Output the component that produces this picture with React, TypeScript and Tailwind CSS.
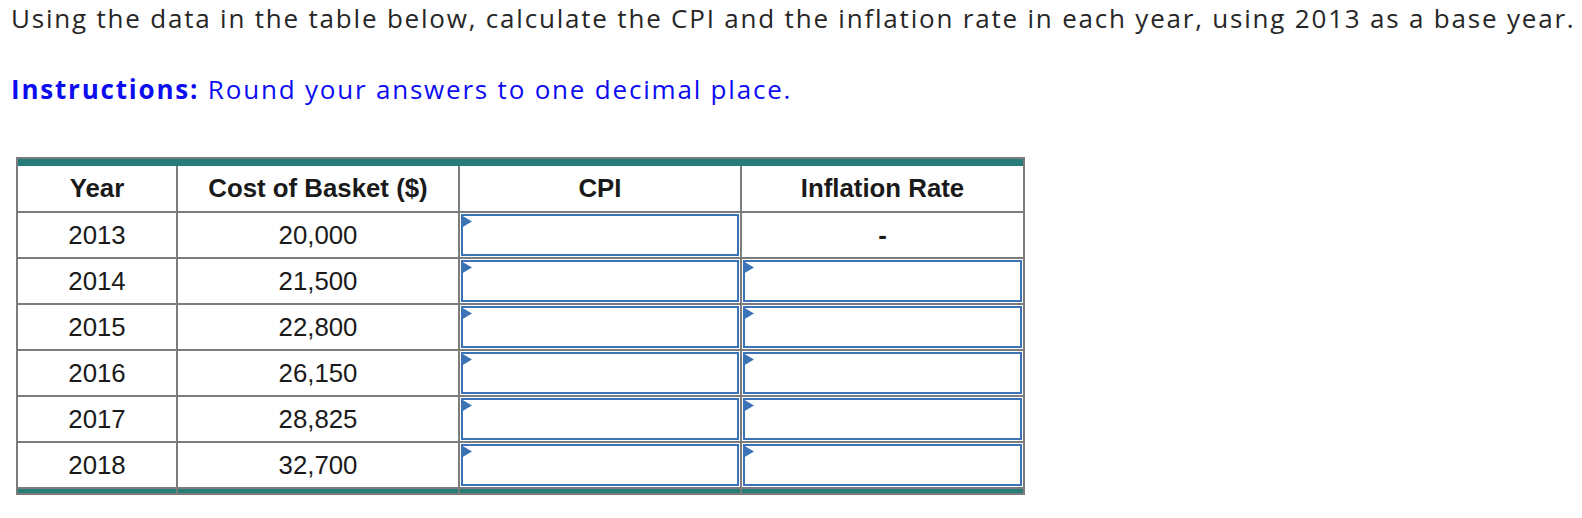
import React from "react";

const rows: [string, string][] = [
  ["2013", "20,000"],
  ["2014", "21,500"],
  ["2015", "22,800"],
  ["2016", "26,150"],
  ["2017", "28,825"],
  ["2018", "32,700"],
];

function Tri() {
  return (
    <svg
      className="absolute -left-[2px] -top-[1px]"
      width="11"
      height="13"
      viewBox="0 0 11 13"
    >
      <polygon points="0,0 11,6.5 0,13" fill="#3c72b6" />
    </svg>
  );
}

function InputCell() {
  return (
    <div className="bg-white p-px h-full">
      <div className="relative h-full border-2 border-[#3c72b6] bg-white">
        <Tri />
      </div>
    </div>
  );
}

function TextCell({ children, bold }: { children: React.ReactNode; bold?: boolean }) {
  return (
    <div
      className={`bg-white h-full flex items-center justify-center text-[25.8px] text-[#1a1a1a] ${
        bold ? "font-bold" : ""
      }`}
    >
      {children}
    </div>
  );
}

export default function App() {
  return (
    <div className="bg-white w-[1582px] h-[518px] overflow-hidden">
      <div
        className="pl-[11px] text-[26px] leading-[36px] tracking-[1.8px] text-[#262626] whitespace-nowrap"
        style={{ fontFamily: "'Open Sans', Lato, sans-serif" }}
      >
        <p>
          Using the data in the table below, calculate the CPI and the inflation rate in each year, using 2013 as a base year.
        </p>
        <p className="mt-[35px] text-[#0c0cf0]">
          <span className="font-bold">Instructions:</span> Round your answers to one decimal place.
        </p>
      </div>
      <div
        className="ml-[16px] mt-[50px] w-[1009px] border-2 border-[#7c7c7c] bg-[#7c7c7c]"
        style={{ fontFamily: "'Liberation Sans', Arial, sans-serif" }}
      >
        <div className="h-[7px] bg-[#267c79]" />
        <div className="grid grid-cols-[158px_280px_280px_281px] grid-rows-[45px_repeat(6,44px)_4px] gap-[2px]">
          <TextCell bold>Year</TextCell>
          <TextCell bold>Cost of Basket ($)</TextCell>
          <TextCell bold>CPI</TextCell>
          <TextCell bold>Inflation Rate</TextCell>
          {rows.map(([y, c], i) => (
            <React.Fragment key={y}>
              <TextCell>{y}</TextCell>
              <TextCell>{c}</TextCell>
              <InputCell />
              {i === 0 ? <TextCell bold>-</TextCell> : <InputCell />}
            </React.Fragment>
          ))}
          <div className="bg-[#267c79]" />
          <div className="bg-[#267c79]" />
          <div className="bg-[#267c79]" />
          <div className="bg-[#267c79]" />
        </div>
      </div>
    </div>
  );
}
